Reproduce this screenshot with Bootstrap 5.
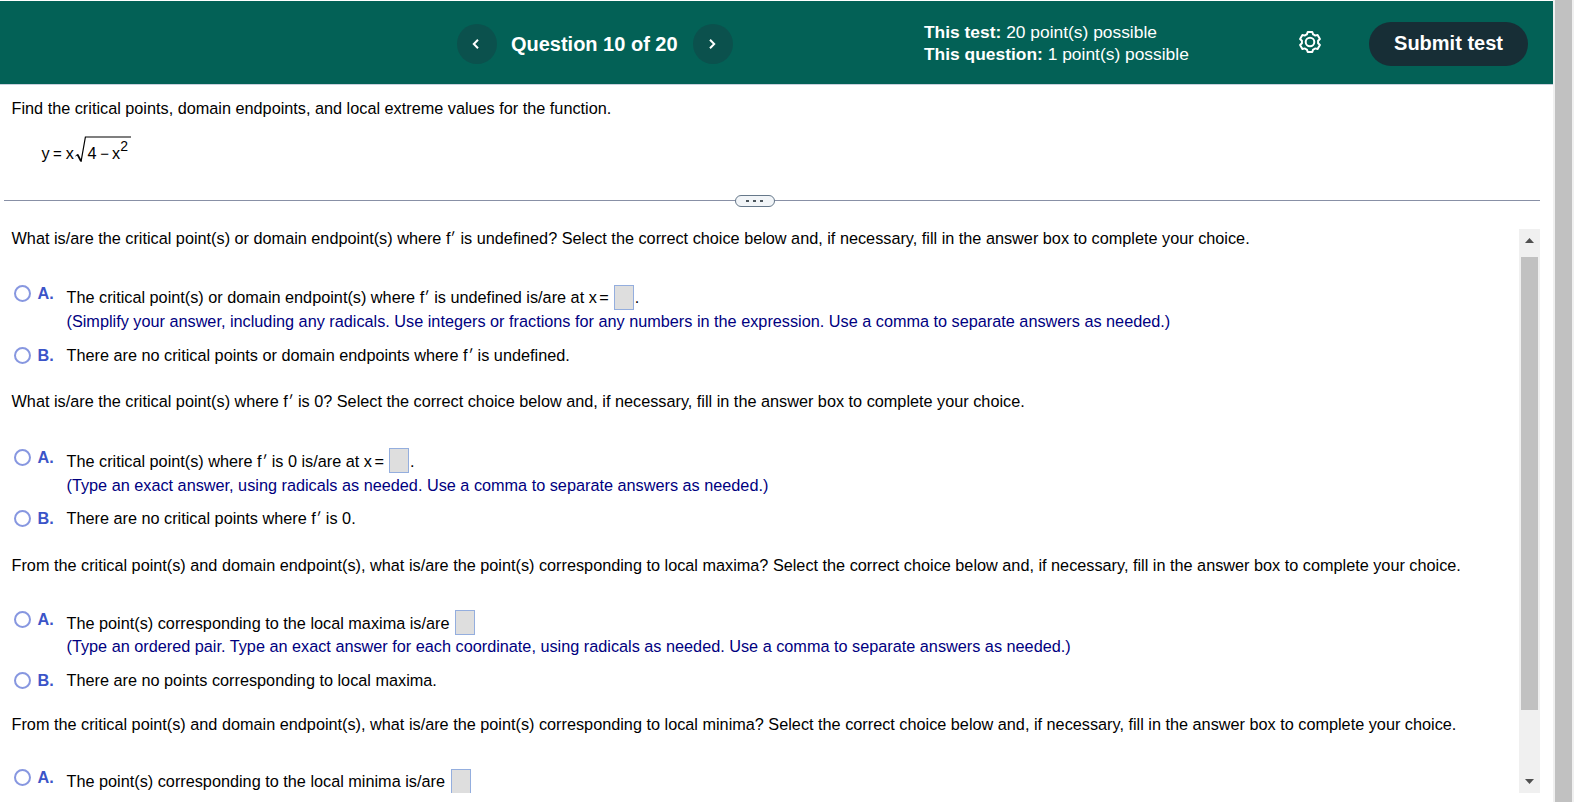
<!DOCTYPE html>
<html lang="en">
<head>
<meta charset="utf-8">
<meta name="viewport" content="width=device-width, initial-scale=1">
<title>Question 10 of 20</title>
<link href="https://cdn.jsdelivr.net/npm/bootstrap@5.3.0/dist/css/bootstrap.min.css" rel="stylesheet">
<script src="https://cdn.jsdelivr.net/npm/bootstrap@5.3.0/dist/js/bootstrap.bundle.min.js"></script>
<style>
html,body{height:100%;overflow:hidden}
body{font-family:"Liberation Sans",Arial,sans-serif;font-size:16.25px;line-height:20px;color:#000;background:#fff}
svg{display:block}
.topbar{height:85px;background:#036156;border-top:1px solid #fff;border-bottom:1px solid #c8cfdc;color:#fff;padding:2px 25px 0 457px}
.round-btn{width:40px;height:40px;border-radius:50%;background:#0b514d;border:0;padding:0 2px 0 0;color:#fff}
.q-title{font-size:20px;font-weight:700;width:195.5px;text-align:center;white-space:nowrap;padding-right:1px}
.points{margin-left:191.5px;font-size:17.4px;line-height:22px;white-space:nowrap;width:374px;padding-bottom:1px}
.gear{margin-top:-3px}
.submit{margin-left:auto;width:159px;height:44px;border-radius:22px;background:#172e36;color:#fff;font-size:20px;font-weight:700;white-space:nowrap;padding:0 0 2px;border:0}
.prompt{height:109px;padding:13px 0 0 11.5px}
.split{height:34px;margin-left:4px;width:1536px;padding-top:6px}
.split-line{height:1px;background:#8890a6;width:100%}
.grip{width:40px;height:12px;border:1px solid #66788a;border-radius:7px;background:#f2f5f8;gap:4px;left:731px;top:1px;padding-right:1px}
.grip i{width:3px;height:2px;background:#4c555c}
.qarea{height:565px;width:1540px}
.questions{padding-left:11.5px;height:565px;overflow:hidden;white-space:nowrap}
.qblock{display:grid;grid-template-columns:55px 1fr}
.qblock>.ask{grid-column:1/3}
.q1{grid-template-rows:59px 24px 34px 46px;--up:-2px;--gap:5.5px}
.q2{grid-template-rows:60px 24px 33px 47px;--up:-3px;--gap:5.5px}
.q3{grid-template-rows:58px 23px 34px 44px;--up:-3px;--gap:5.5px}
.q4{grid-template-rows:57px 22px;--up:-2px;--gap:6.3px}
.opt{height:20px;color:#3b54c8;font-weight:700;gap:7px;padding-left:2px}
.opt.first{margin-top:-4px}
.ring{width:17px;height:17px;border:2px solid #8797e0;border-radius:50%;margin-top:2px}
.hint{grid-column:2;color:#00007f}
.blank{width:20px;height:25px;border:1px solid #94aede;background:#dedede;margin:var(--up) .5px 0 var(--gap);flex:none}
.prime{display:inline-block;transform:translateY(-1px) skewX(-8deg) scaleY(1.15);margin:0 1.5px 0 1px}
.eq{margin-left:-2px}
.bar{width:21px;height:564px;margin-top:1px;background:#f0f0f0;padding:9px 0 9px}
.thumb{width:17px;height:453px;background:#c1c1c1;margin-top:14px}
.pagebar{width:21px;background:#f0f0f0}
.pagethumb{width:17px;background:#c1c1c1}
</style>
</head>
<body>
<div class="d-flex h-100">
<div class="flex-grow-1 d-flex flex-column">
  <header class="topbar d-flex align-items-center">
    <button class="round-btn d-flex align-items-center justify-content-center" aria-label="Previous"><svg width="12" height="12" viewBox="0 0 12 12" fill="none" stroke="#fff" stroke-width="2"><path d="M8 1.7 3.8 6 8 10.3"/></svg></button>
    <div class="q-title">Question 10 of 20</div>
    <button class="round-btn d-flex align-items-center justify-content-center" aria-label="Next"><svg width="12" height="12" viewBox="0 0 12 12" fill="none" stroke="#fff" stroke-width="2"><path d="M4 1.7 8.2 6 4 10.3"/></svg></button>
    <div class="points"><b>This test:</b> 20 point(s) possible<br><b>This question:</b> 1 point(s) possible</div>
    <svg class="gear" width="24" height="24" viewBox="-12 -12 24 24" fill="none" stroke="#fff" stroke-width="2" stroke-linejoin="round"><circle r="4.3"/><path d="M-2.3-10H2.3L3.1-7.6Q4.2-7.2 5.1-6.4L7.6-7 9.9-3 8.1-1.2V1.2L9.9 3 7.6 7 5.1 6.4Q4.2 7.2 3.1 7.6L2.3 10H-2.3L-3.1 7.6Q-4.2 7.2-5.1 6.4L-7.6 7-9.9 3-8.1 1.2V-1.2L-9.9-3-7.6-7-5.1-6.4Q-4.2-7.2-3.1-7.6Z"/></svg>
    <button class="submit">Submit test</button>
  </header>
  <section class="prompt">
    <div>Find the critical points, domain endpoints, and local extreme values for the function.</div>
    <svg class="mt-2" width="130" height="44" viewBox="12 126 130 44" font-family="Liberation Sans" font-size="16.25"><text x="41.5" y="159">y</text><text x="53" y="159" font-size="15">=</text><text x="65.8" y="159">x</text><path d="M75.5 156l2.2-1.6" fill="none" stroke="#000" stroke-width="1"/><path d="M77.5 154.5l3.4 6.5" fill="none" stroke="#000" stroke-width="1.7"/><path d="M81 161.8L85.4 137H131" fill="none" stroke="#000" stroke-width="1.2"/><text x="87.5" y="159">4</text><text x="100.3" y="159" font-size="15">−</text><text x="112" y="159">x</text><text x="120.3" y="151" font-size="14">2</text></svg>
  </section>
  <div class="split position-relative"><div class="split-line"></div><div class="grip position-absolute d-flex align-items-center justify-content-center"><i></i><i></i><i></i></div></div>
  <main class="qarea d-flex justify-content-between">
    <div class="questions">
      <div class="qblock q1">
        <div class="ask">What is/are the critical point(s) or domain endpoint(s) where f<span class="prime">′</span> is undefined? Select the correct choice below and, if necessary, fill in the answer box to complete your choice.</div>
        <div class="opt first d-flex"><span class="ring"></span>A.</div><div class="d-flex align-items-start"><span>The critical point(s) or domain endpoint(s) where f<span class="prime">′</span> is undefined is/are at x <span class="eq">=</span></span><span class="blank"></span>.</div>
        <div class="hint">(Simplify your answer, including any radicals. Use integers or fractions for any numbers in the expression. Use a comma to separate answers as needed.)</div>
        <div class="opt d-flex"><span class="ring"></span>B.</div><div>There are no critical points or domain endpoints where f<span class="prime">′</span> is undefined.</div>
      </div>
      <div class="qblock q2">
        <div class="ask">What is/are the critical point(s) where f<span class="prime">′</span> is 0? Select the correct choice below and, if necessary, fill in the answer box to complete your choice.</div>
        <div class="opt first d-flex"><span class="ring"></span>A.</div><div class="d-flex align-items-start"><span>The critical point(s) where f<span class="prime">′</span> is 0 is/are at x <span class="eq">=</span></span><span class="blank"></span>.</div>
        <div class="hint">(Type an exact answer, using radicals as needed. Use a comma to separate answers as needed.)</div>
        <div class="opt d-flex"><span class="ring"></span>B.</div><div>There are no critical points where f<span class="prime">′</span> is 0.</div>
      </div>
      <div class="qblock q3">
        <div class="ask">From the critical point(s) and domain endpoint(s), what is/are the point(s) corresponding to local maxima? Select the correct choice below and, if necessary, fill in the answer box to complete your choice.</div>
        <div class="opt first d-flex"><span class="ring"></span>A.</div><div class="d-flex align-items-start"><span>The point(s) corresponding to the local maxima is/are</span><span class="blank"></span></div>
        <div class="hint">(Type an ordered pair. Type an exact answer for each coordinate, using radicals as needed. Use a comma to separate answers as needed.)</div>
        <div class="opt d-flex"><span class="ring"></span>B.</div><div>There are no points corresponding to local maxima.</div>
      </div>
      <div class="qblock q4">
        <div class="ask">From the critical point(s) and domain endpoint(s), what is/are the point(s) corresponding to local minima? Select the correct choice below and, if necessary, fill in the answer box to complete your choice.</div>
        <div class="opt first d-flex"><span class="ring"></span>A.</div><div class="d-flex align-items-start"><span>The point(s) corresponding to the local minima is/are</span><span class="blank"></span></div>
      </div>
    </div>
    <div class="bar d-flex flex-column align-items-center">
      <svg width="9" height="5" viewBox="0 0 9 5" fill="#505050"><path d="M0 5 4.5 0 9 5Z"/></svg>
      <div class="thumb"></div>
      <svg class="mt-auto" width="9" height="5" viewBox="0 0 9 5" fill="#505050"><path d="M0 0 4.5 5 9 0Z"/></svg>
    </div>
  </main>
</div>
<div class="pagebar d-flex justify-content-center"><div class="pagethumb"></div></div>
</div>
</body>
</html>
